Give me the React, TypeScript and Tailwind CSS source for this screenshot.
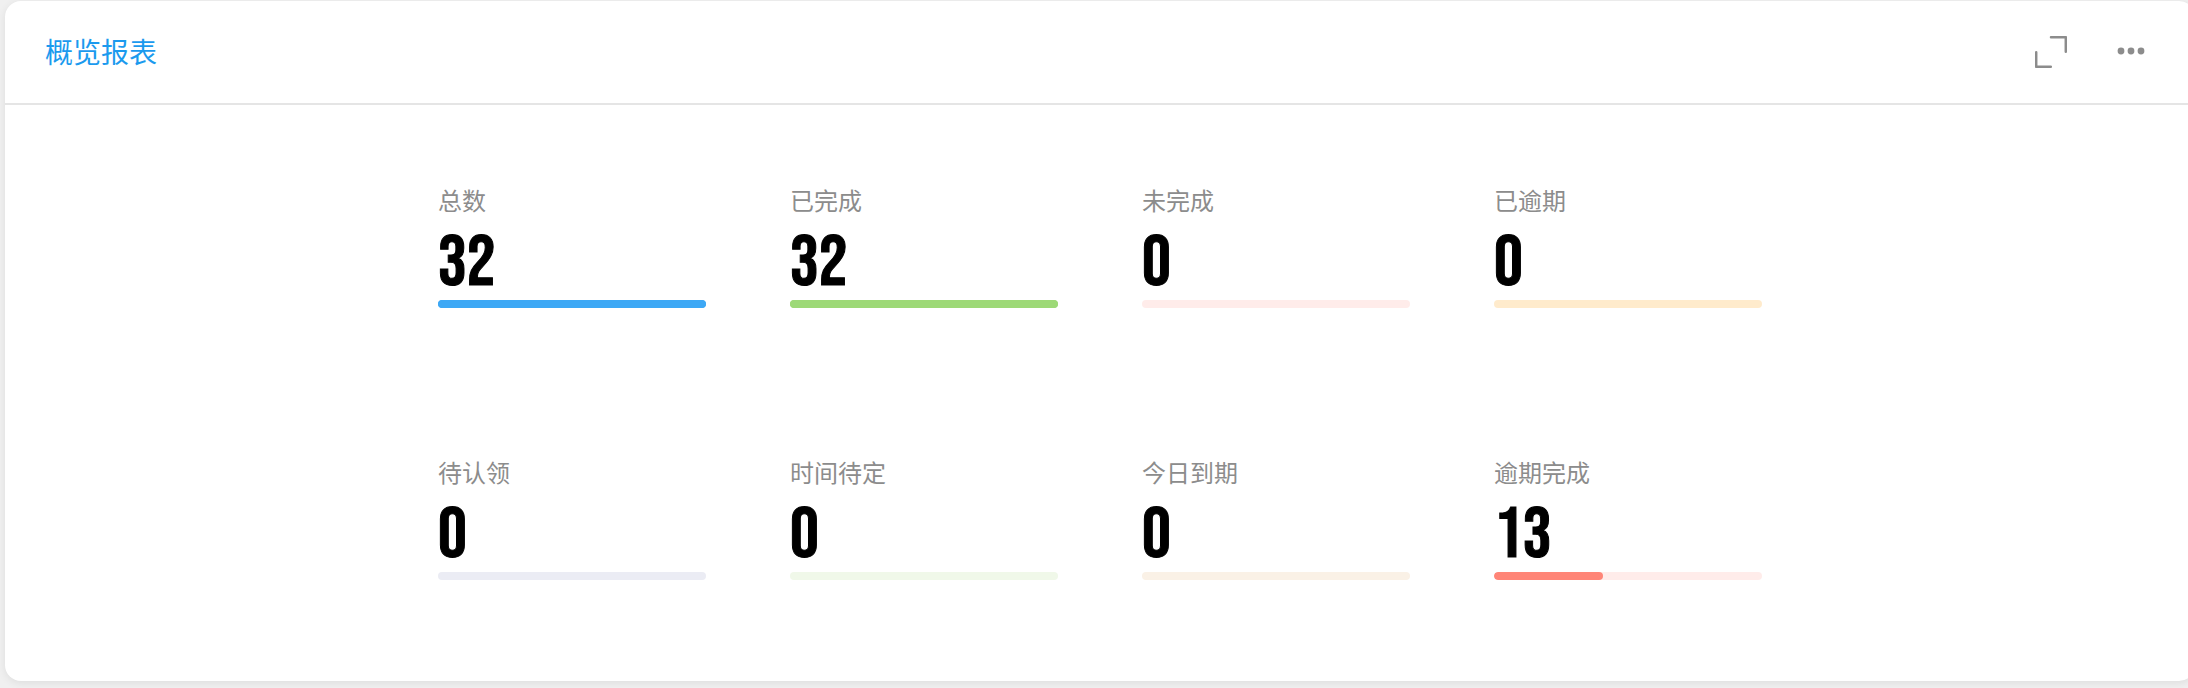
import React from "react";

type Stat = {
  label: string;
  value: number;
  percent: number;
  track: string;
  fill: string;
};

const stats: Stat[] = [
  { label: "总数", value: 32, percent: 100, track: "bg-[#3da8f5]", fill: "bg-[#3da8f5]" },
  { label: "已完成", value: 32, percent: 100, track: "bg-[#9dd977]", fill: "bg-[#9dd977]" },
  { label: "未完成", value: 0, percent: 0, track: "bg-[#ffecea]", fill: "bg-[#ff8577]" },
  { label: "已逾期", value: 0, percent: 0, track: "bg-[#ffebcc]", fill: "bg-[#ffaf38]" },
  { label: "待认领", value: 0, percent: 0, track: "bg-[#ebecf4]", fill: "bg-[#8a90c7]" },
  { label: "时间待定", value: 0, percent: 0, track: "bg-[#f0f8e9]", fill: "bg-[#9dd977]" },
  { label: "今日到期", value: 0, percent: 0, track: "bg-[#faf1e6]", fill: "bg-[#e8a656]" },
  { label: "逾期完成", value: 13, percent: 40.6, track: "bg-[#ffecea]", fill: "bg-[#ff8577]" },
];

function StatItem({ label, value, percent, track, fill }: Stat) {
  return (
    <div>
      <dt className="text-2xl leading-8 text-[#8c8c8c]">{label}</dt>
      <dd className="pt-3">
        <div className="font-['Bebas_Neue','Roboto_Condensed',sans-serif] text-[72px] leading-[72px] font-normal text-black [-webkit-text-stroke:1px_black]">
          {value}
        </div>
        <div className={`h-2 overflow-hidden rounded-full ${track}`}>
          <div className={`h-full rounded-full ${fill}`} style={{ width: `${percent}%` }} />
        </div>
      </dd>
    </div>
  );
}

export default function App() {
  return (
    <main className="overflow-hidden bg-[#f0f0f0] pt-px pb-[7px] pl-[5px] font-['Noto_Sans_CJK_SC',sans-serif]">
      <section className="-mr-[7px] rounded-2xl bg-white shadow-[0_2px_8px_rgba(0,0,0,0.08)]">
        <header className="flex h-[104px] items-center justify-between border-b-2 border-[#e5e5e5] pr-[50px] pl-10">
          <h1 className="pb-0.5 text-[28px] leading-10 text-[#1b9aee]">概览报表</h1>
          <div className="flex items-center gap-[50px] text-[#8c8c8c]">
            <button type="button" aria-label="全屏" className="block">
              <svg className="size-8" viewBox="0 0 32 32" fill="none" stroke="currentColor" strokeWidth="2.5" strokeLinecap="round" strokeLinejoin="round">
                <path d="M16 1.2H30.8V15.8M1.2 16.2V30.8H15.8" />
              </svg>
            </button>
            <button type="button" aria-label="更多" className="block">
              <svg className="h-7 w-7" viewBox="0 0 28 28" fill="currentColor">
                <circle cx="4" cy="13" r="3.4" />
                <circle cx="14" cy="13" r="3.4" />
                <circle cx="24" cy="13" r="3.4" />
              </svg>
            </button>
          </div>
        </header>
        <dl className="mx-auto grid max-w-[1324px] grid-cols-4 gap-x-[84px] gap-y-[148px] pt-[79px] pb-[101px]">
          {stats.map((stat) => (
            <StatItem key={stat.label} {...stat} />
          ))}
        </dl>
      </section>
    </main>
  );
}
